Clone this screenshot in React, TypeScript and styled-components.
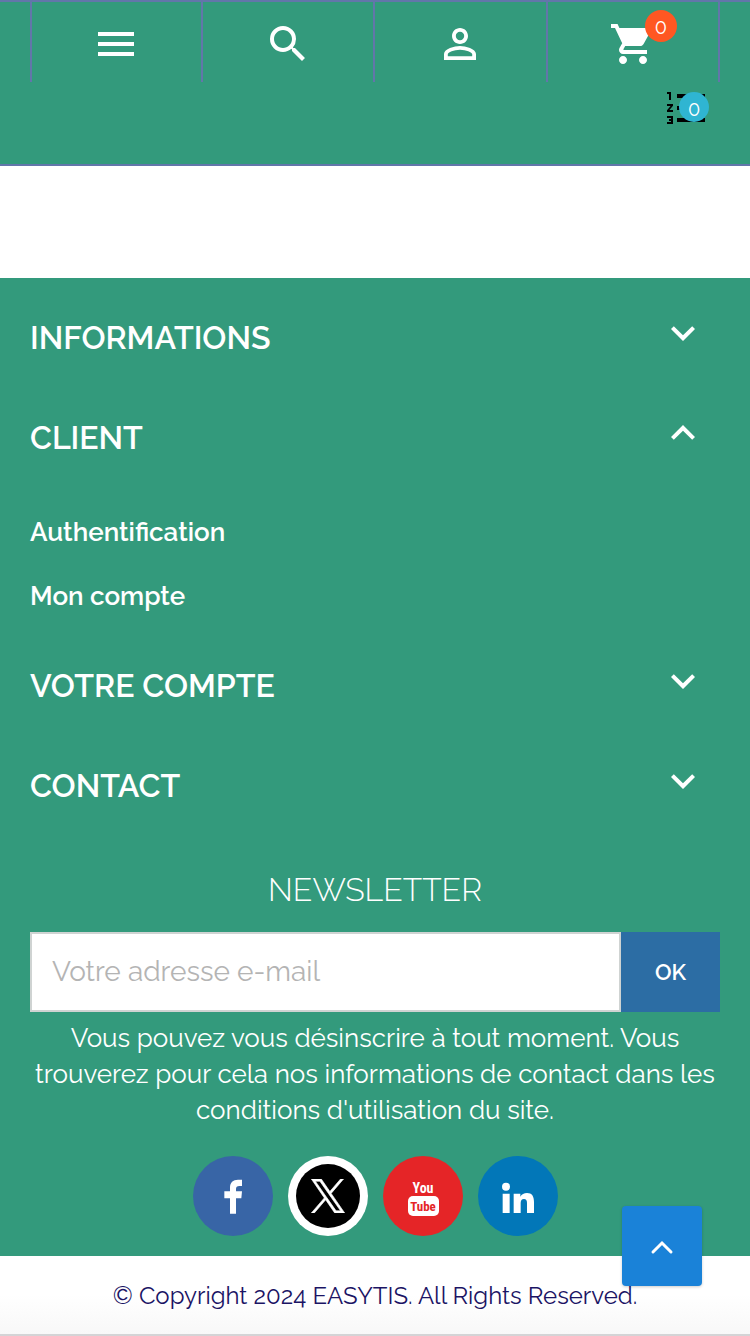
import React, { useState } from "react";
import styled, { createGlobalStyle } from "styled-components";
import {
  MdExpandLess,
  MdExpandMore,
  MdFormatListNumbered,
  MdMenu,
  MdPersonOutline,
  MdSearch,
  MdShoppingCart,
} from "react-icons/md";

const green = "#339a7c";
const line = "#6276aa";

const GlobalStyle = createGlobalStyle`
  *, *::before, *::after { box-sizing: border-box; }
  body {
    margin: 0;
    background: #fff;
    color: #fff;
    font-family: Raleway, Lato, "Open Sans", sans-serif;
  }
  button, input { font-family: inherit; }
`;

const Page = styled.div`
  display: flex;
  flex-direction: column;
  min-height: 100vh;
`;

const Header = styled.header`
  background: ${green};
  border-top: 2px solid ${line};
  border-bottom: 2px solid ${line};
`;

const NavBar = styled.nav`
  display: grid;
  grid-template-columns: repeat(4, 1fr);
  height: 80px;
  padding: 0 30px;
`;

const NavButton = styled.button`
  display: flex;
  justify-content: center;
  align-items: center;
  padding: 4px 0 0;
  border: 0;
  border-right: 2px solid ${line};
  background: none;
  color: #fff;
  cursor: pointer;

  &:first-child {
    border-left: 2px solid ${line};
  }
`;

const IconHolder = styled.span`
  position: relative;
  display: flex;
`;

const Badge = styled.span<{ $size: number; $left: number; $top: number; $color: string }>`
  position: absolute;
  left: ${(p) => p.$left}px;
  top: ${(p) => p.$top}px;
  width: ${(p) => p.$size}px;
  height: ${(p) => p.$size}px;
  border-radius: 50%;
  background: ${(p) => p.$color};
  color: #fff;
  font-size: 20px;
  font-weight: 400;
  line-height: 34px;
  text-align: center;
`;

const ListRow = styled.div`
  display: flex;
  justify-content: flex-end;
  height: 82px;
  padding: 2px 39px 0 0;
`;

const ListButton = styled.button`
  position: relative;
  display: flex;
  height: 48px;
  padding: 0;
  border: 0;
  background: none;
  color: #000;
  cursor: pointer;
`;

const Content = styled.main`
  height: 112px;
`;

const Footer = styled.footer`
  padding: 10px 30px 20px;
  background: ${green};
`;

const SectionButton = styled.button`
  display: flex;
  justify-content: space-between;
  align-items: center;
  width: 100%;
  height: 100px;
  padding: 0 13px 2px 0;
  border: 0;
  background: none;
  color: #fff;
  font-size: 32px;
  font-weight: 600;
  text-align: left;
  text-transform: uppercase;
  cursor: pointer;

  svg {
    margin-bottom: 8px;
  }
`;

const Links = styled.ul`
  margin: 0;
  padding: 12px 0 8px;
  list-style: none;
`;

const LinkItem = styled.li`
  font-size: 26px;
  font-weight: 600;
  line-height: 64px;

  a {
    color: #fff;
    text-decoration: none;
  }
`;

const Newsletter = styled.section`
  padding-top: 36px;
  text-align: center;
`;

const NewsletterTitle = styled.h2`
  margin: 0 0 24px;
  font-size: 32px;
  font-weight: 300;
  line-height: 36px;
  text-transform: uppercase;
`;

const Form = styled.form`
  display: flex;
  height: 80px;
`;

const Email = styled.input`
  flex: 1;
  min-width: 0;
  padding: 0 20px 2px;
  border: 2px solid #cfd3d2;
  border-radius: 0;
  outline: 0;
  background: #fff;
  color: #444;
  font-size: 28px;
  font-weight: 400;

  &::placeholder {
    color: #b4b4b4;
    opacity: 1;
  }
`;

const Submit = styled.button`
  width: 99px;
  border: 0;
  background: #2c6da4;
  color: #fff;
  font-size: 22px;
  font-weight: 600;
  cursor: pointer;
`;

const Notice = styled.p`
  margin: 8px 0 28px;
  font-size: 26px;
  font-weight: 400;
  line-height: 36px;
`;

const Socials = styled.div`
  display: flex;
  justify-content: center;
  gap: 15px;
`;

const Social = styled.a<{ $color: string }>`
  display: flex;
  width: 80px;
  height: 80px;
  border-radius: 50%;
  background: ${(p) => p.$color};

  > svg {
    width: 80px;
    height: 80px;
  }
`;

const Copyright = styled.div`
  height: 80px;
  border-bottom: 2px solid #d4d4d6;
  background: linear-gradient(#fff 50%, #f8f8f8);
  color: #1b1464;
  font-size: 24px;
  line-height: 80px;
  text-align: center;
`;

const BackToTop = styled.button`
  position: fixed;
  right: 48px;
  bottom: 50px;
  display: flex;
  justify-content: center;
  align-items: center;
  width: 80px;
  height: 80px;
  padding: 4px 0 0;
  border: 0;
  border-radius: 4px;
  background: #1a82d8;
  box-shadow: 0 1px 3px rgba(0, 0, 0, 0.2);
  cursor: pointer;
`;

const sections = [
  { title: "Informations", links: ["Livraison", "Mentions légales"] },
  { title: "Client", links: ["Authentification", "Mon compte"] },
  { title: "Votre compte", links: ["Commandes", "Adresses"] },
  { title: "Contact", links: ["Contactez-nous"] },
];

export default function App() {
  const [open, setOpen] = useState("Client");

  return (
    <Page>
      <GlobalStyle />
      <Header>
        <NavBar aria-label="Navigation principale">
          <NavButton aria-label="Menu">
            <IconHolder><MdMenu size={48} /></IconHolder>
          </NavButton>
          <NavButton aria-label="Rechercher">
            <IconHolder><MdSearch size={48} /></IconHolder>
          </NavButton>
          <NavButton aria-label="Mon compte">
            <IconHolder><MdPersonOutline size={48} /></IconHolder>
          </NavButton>
          <NavButton aria-label="Panier">
            <IconHolder>
              <MdShoppingCart size={48} />
              <Badge $size={32} $left={36} $top={-10} $color="#ff5722">0</Badge>
            </IconHolder>
          </NavButton>
        </NavBar>
        <ListRow>
          <ListButton aria-label="Listes">
            <MdFormatListNumbered size={48} />
            <Badge $size={30} $left={16} $top={8} $color="#2fb5d2">0</Badge>
          </ListButton>
        </ListRow>
      </Header>

      <Content />

      <Footer>
        {sections.map(({ title, links }) => (
          <div key={title}>
            <SectionButton
              aria-expanded={open === title}
              onClick={() => setOpen(open === title ? "" : title)}
            >
              {title}
              {open === title ? <MdExpandLess size={48} /> : <MdExpandMore size={48} />}
            </SectionButton>
            {open === title && (
              <Links>
                {links.map((link) => (
                  <LinkItem key={link}><a href="#">{link}</a></LinkItem>
                ))}
              </Links>
            )}
          </div>
        ))}

        <Newsletter>
          <NewsletterTitle>Newsletter</NewsletterTitle>
          <Form onSubmit={(e) => e.preventDefault()}>
            <Email type="email" placeholder="Votre adresse e-mail" aria-label="Votre adresse e-mail" />
            <Submit type="submit">OK</Submit>
          </Form>
          <Notice>
            Vous pouvez vous désinscrire à tout moment. Vous trouverez pour cela nos
            informations de contact dans les conditions d'utilisation du site.
          </Notice>
        </Newsletter>

        <Socials>
          <Social href="#" aria-label="Facebook" $color="#3865a6">
            <svg viewBox="0 0 240 240" fill="#fff">
              <path d="M111 173V127H94V106H111V95C111 79 120 71 135 71H147V90H139C132 90 129 93 129 99V106H147L145 127H129V173Z" />
            </svg>
          </Social>
          <Social href="#" aria-label="X" $color="#fff">
            <svg viewBox="0 0 240 240">
              <circle cx="120" cy="120" r="96" />
              <svg x="68" y="69" width="104" height="102" viewBox="0 0 1200 1227" fill="#fff" stroke="#fff" strokeWidth="24">
                <path d="M714.163 519.284L1160.89 0H1055.03L667.137 450.887L357.328 0H0L468.492 681.821L0 1226.37H105.866L515.491 750.218L842.672 1226.37H1200L714.137 519.284ZM569.165 687.828L521.697 619.934L144.011 79.694H306.615L611.412 515.685L658.88 583.579L1055.08 1150.3H892.476L569.165 687.854Z" />
              </svg>
            </svg>
          </Social>
          <Social href="#" aria-label="YouTube" $color="#e52527">
            <svg viewBox="0 0 80 80" textAnchor="middle" fontFamily="'Liberation Sans Narrow', 'Roboto Condensed', 'Open Sans Condensed', Roboto, sans-serif" fontWeight="700">
              <text x="40" y="37" fontSize="14" fill="#fff">You</text>
              <rect x="25" y="40" width="31" height="20" rx="5" fill="#fff" />
              <text x="40" y="55" fontSize="13" fill="#e52527">Tube</text>
            </svg>
          </Social>
          <Social href="#" aria-label="LinkedIn" $color="#0277b8">
            <svg viewBox="0 0 240 240" fill="#fff">
              <circle cx="84" cy="92" r="12" />
              <path d="M74 113H95V171H74ZM107 113H127V122C131 115 138 111 147 111C162 111 168 121 168 138V171H147V141C147 133 144 129 138 129C131 129 128 134 128 141V171H107Z" />
            </svg>
          </Social>
        </Socials>
      </Footer>

      <Copyright>© Copyright 2024 EASYTIS. All Rights Reserved.</Copyright>

      <BackToTop aria-label="Haut de page" onClick={() => window.scrollTo({ top: 0 })}>
        <svg width="24" height="16" viewBox="0 0 24 16" fill="none" stroke="#fff" strokeWidth="3" strokeLinecap="round">
          <path d="M3 12L12 3L21 12" />
        </svg>
      </BackToTop>
    </Page>
  );
}
